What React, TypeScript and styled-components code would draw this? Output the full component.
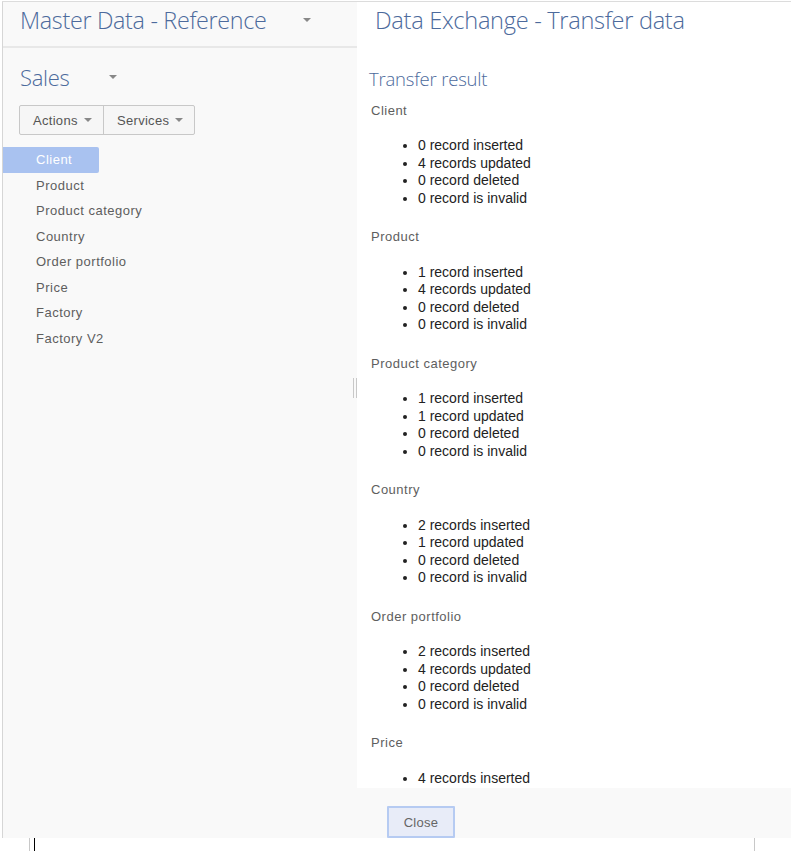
import React from "react";
import styled, { createGlobalStyle } from "styled-components";

const Global = createGlobalStyle`
  html, body { margin: 0; padding: 0; background: #ffffff; }
  body { font-family: "Liberation Sans", Arial, sans-serif; overflow: hidden; }
  * { box-sizing: border-box; }
`;

const Page = styled.div`
  width: 791px;
  height: 851px;
  display: flex;
  flex-direction: column;
  padding-top: 1px;
`;

const Frame = styled.div`
  height: 837px;
  flex: none;
  display: flex;
  border-top: 1px solid #dcdcdc;
  margin-left: 2px;
`;

const Sidebar = styled.aside`
  width: 355px;
  flex: none;
  background: #f9f9f9;
  border-left: 1px solid #d6d6d6;
  position: relative;
  display: flex;
  flex-direction: column;
`;

const SideHeader = styled.div`
  height: 46px;
  flex: none;
  border-bottom: 2px solid #e8e8e8;
  display: flex;
  align-items: flex-start;
  padding: 2px 46px 0 17px;
  justify-content: space-between;
`;

const HeadTitle = styled.h1<{ $size: number }>`
  margin: 0;
  font-family: "Open Sans", sans-serif;
  font-weight: 300;
  font-size: ${(p) => p.$size}px;
  line-height: 32px;
  color: #4c6a9c;
  letter-spacing: -0.3px;
`;

const Caret = styled.span<{ $color?: string; $w?: number; $mt?: number }>`
  display: inline-block;
  width: 0;
  height: 0;
  margin-top: ${(p) => p.$mt ?? 0}px;
  border-left: ${(p) => (p.$w ?? 8) / 2}px solid transparent;
  border-right: ${(p) => (p.$w ?? 8) / 2}px solid transparent;
  border-top: ${(p) => (p.$w ?? 8) / 2}px solid ${(p) => p.$color ?? "#888"};
`;

const SalesRow = styled.div`
  display: flex;
  gap: 40px;
  padding: 13px 0 0 17px;
  height: 56px;
  flex: none;
  align-items: flex-start;
`;

const BtnGroup = styled.div`
  display: inline-flex;
  margin: 1px 0 0 16px;
  align-self: flex-start;
  flex: none;
  border: 1px solid #c8c8c8;
  border-radius: 2px;
  background: #f6f6f6;
`;

const GroupBtn = styled.button<{ $first?: boolean; $w: number }>`
  height: 28px;
  width: ${(p) => p.$w}px;
  padding: 0 0 0 13px;
  display: inline-flex;
  align-items: center;
  gap: 6px;
  background: transparent;
  border: none;
  border-left: ${(p) => (p.$first ? "none" : "1px solid #c8c8c8")};
  font-family: "Liberation Sans", Arial, sans-serif;
  font-size: 13px;
  letter-spacing: 0.3px;
  color: #555;
`;

const NavList = styled.ul`
  list-style: none;
  margin: 12px 0 0 0;
  padding: 0;
  flex: none;
`;

const NavItem = styled.li<{ $active?: boolean }>`
  height: 25.5px;
  line-height: 25.5px;
  padding-left: 33px;
  width: ${(p) => (p.$active ? "96px" : "auto")};
  font-size: 13px;
  letter-spacing: 0.5px;
  color: ${(p) => (p.$active ? "#ffffff" : "#5e5e5e")};
  background: ${(p) => (p.$active ? "#a9c2f0" : "transparent")};
  border-radius: 0 2px 2px 0;
`;

const Splitter = styled.div`
  position: absolute;
  right: 0px;
  top: 376px;
  width: 4px;
  height: 20px;
  border-left: 1px solid #c8c8c8;
  border-right: 1px solid #c8c8c8;
`;

const Main = styled.main`
  flex: 1;
  display: flex;
  flex-direction: column;
  min-width: 0;
`;

const Content = styled.div`
  flex: 1;
  min-height: 0;
  background: #ffffff;
  overflow: hidden;
  padding: 0 0 0 12px;
  display: flex;
  flex-direction: column;
  & > * { flex-shrink: 0; }
`;

const MainTitle = styled.div`
  height: 46px;
  padding: 2px 0 0 6px;
`;

const Subtitle = styled.h2`
  margin: 18px 0 0 0;
  height: 25px;
  line-height: 25px;
  font-family: "Open Sans", sans-serif;
  font-weight: 300;
  font-size: 18.5px;
  color: #4c6a9c;
  letter-spacing: -0.2px;
`;

const Results = styled.div`
  padding-top: 11.5px;
  display: flex;
  flex-direction: column;
`;

const Section = styled.section`
  padding-left: 2px;
  display: flex;
  flex-direction: column;
  flex: none;
`;

const SectionLabel = styled.div`
  font-size: 13px;
  letter-spacing: 0.5px;
  color: #5e5e5e;
  height: 15px;
  line-height: 15px;
`;

const ResultList = styled.ul`
  margin: 0;
  padding: 19.5px 0 22px 47px;
  font-size: 14px;
  line-height: 17.5px;
  color: #222;
`;

const Footer = styled.footer`
  height: 50px;
  flex: none;
  background: #f9f9f9;
  display: flex;
  align-items: flex-end;
  padding-left: 30px;
`;

const CloseBtn = styled.button`
  width: 68px;
  height: 32px;
  background: #e8ecf8;
  border: 2px solid #b6cbf2;
  border-radius: 1px;
  font-family: "Liberation Sans", Arial, sans-serif;
  font-size: 13px;
  letter-spacing: 0.3px;
  color: #666;
`;

const BottomStrip = styled.div`
  height: 13px;
  flex: none;
  position: relative;
`;

const Tick = styled.div<{ $left: number; $color: string }>`
  position: absolute;
  top: 0;
  bottom: 0;
  left: ${(p) => p.$left}px;
  width: 1px;
  background: ${(p) => p.$color};
`;

const navItems = [
  "Client",
  "Product",
  "Product category",
  "Country",
  "Order portfolio",
  "Price",
  "Factory",
  "Factory V2",
];

const results: { name: string; items: string[] }[] = [
  { name: "Client", items: ["0 record inserted", "4 records updated", "0 record deleted", "0 record is invalid"] },
  { name: "Product", items: ["1 record inserted", "4 records updated", "0 record deleted", "0 record is invalid"] },
  { name: "Product category", items: ["1 record inserted", "1 record updated", "0 record deleted", "0 record is invalid"] },
  { name: "Country", items: ["2 records inserted", "1 record updated", "0 record deleted", "0 record is invalid"] },
  { name: "Order portfolio", items: ["2 records inserted", "4 records updated", "0 record deleted", "0 record is invalid"] },
  { name: "Price", items: ["4 records inserted"] },
];

export default function App() {
  return (
    <Page>
      <Global />
      <Frame>
        <Sidebar>
          <SideHeader>
            <HeadTitle $size={23.3}>Master Data - Reference</HeadTitle>
            <Caret $w={8} $mt={14} />
          </SideHeader>
          <SalesRow>
            <HeadTitle $size={22}>Sales</HeadTitle>
            <Caret $w={8} $mt={14} />
          </SalesRow>
          <BtnGroup>
            <GroupBtn $first $w={83}>
              Actions <Caret $w={8} />
            </GroupBtn>
            <GroupBtn $w={91}>
              Services <Caret $w={8} />
            </GroupBtn>
          </BtnGroup>
          <NavList>
            {navItems.map((n, i) => (
              <NavItem key={n} $active={i === 0}>
                {n}
              </NavItem>
            ))}
          </NavList>
          <Splitter />
        </Sidebar>
        <Main>
          <Content>
            <MainTitle>
              <HeadTitle $size={23.6}>Data Exchange - Transfer data</HeadTitle>
            </MainTitle>
            <Subtitle>Transfer result</Subtitle>
            <Results>
              {results.map((r) => (
                <Section key={r.name}>
                  <SectionLabel>{r.name}</SectionLabel>
                  <ResultList>
                    {r.items.map((it) => (
                      <li key={it}>{it}</li>
                    ))}
                  </ResultList>
                </Section>
              ))}
            </Results>
          </Content>
          <Footer>
            <CloseBtn>Close</CloseBtn>
          </Footer>
        </Main>
      </Frame>
      <BottomStrip>
        <Tick $left={29} $color="#c8c8c8" />
        <Tick $left={34} $color="#000" />
        <Tick $left={754} $color="#c8c8c8" />
      </BottomStrip>
    </Page>
  );
}
